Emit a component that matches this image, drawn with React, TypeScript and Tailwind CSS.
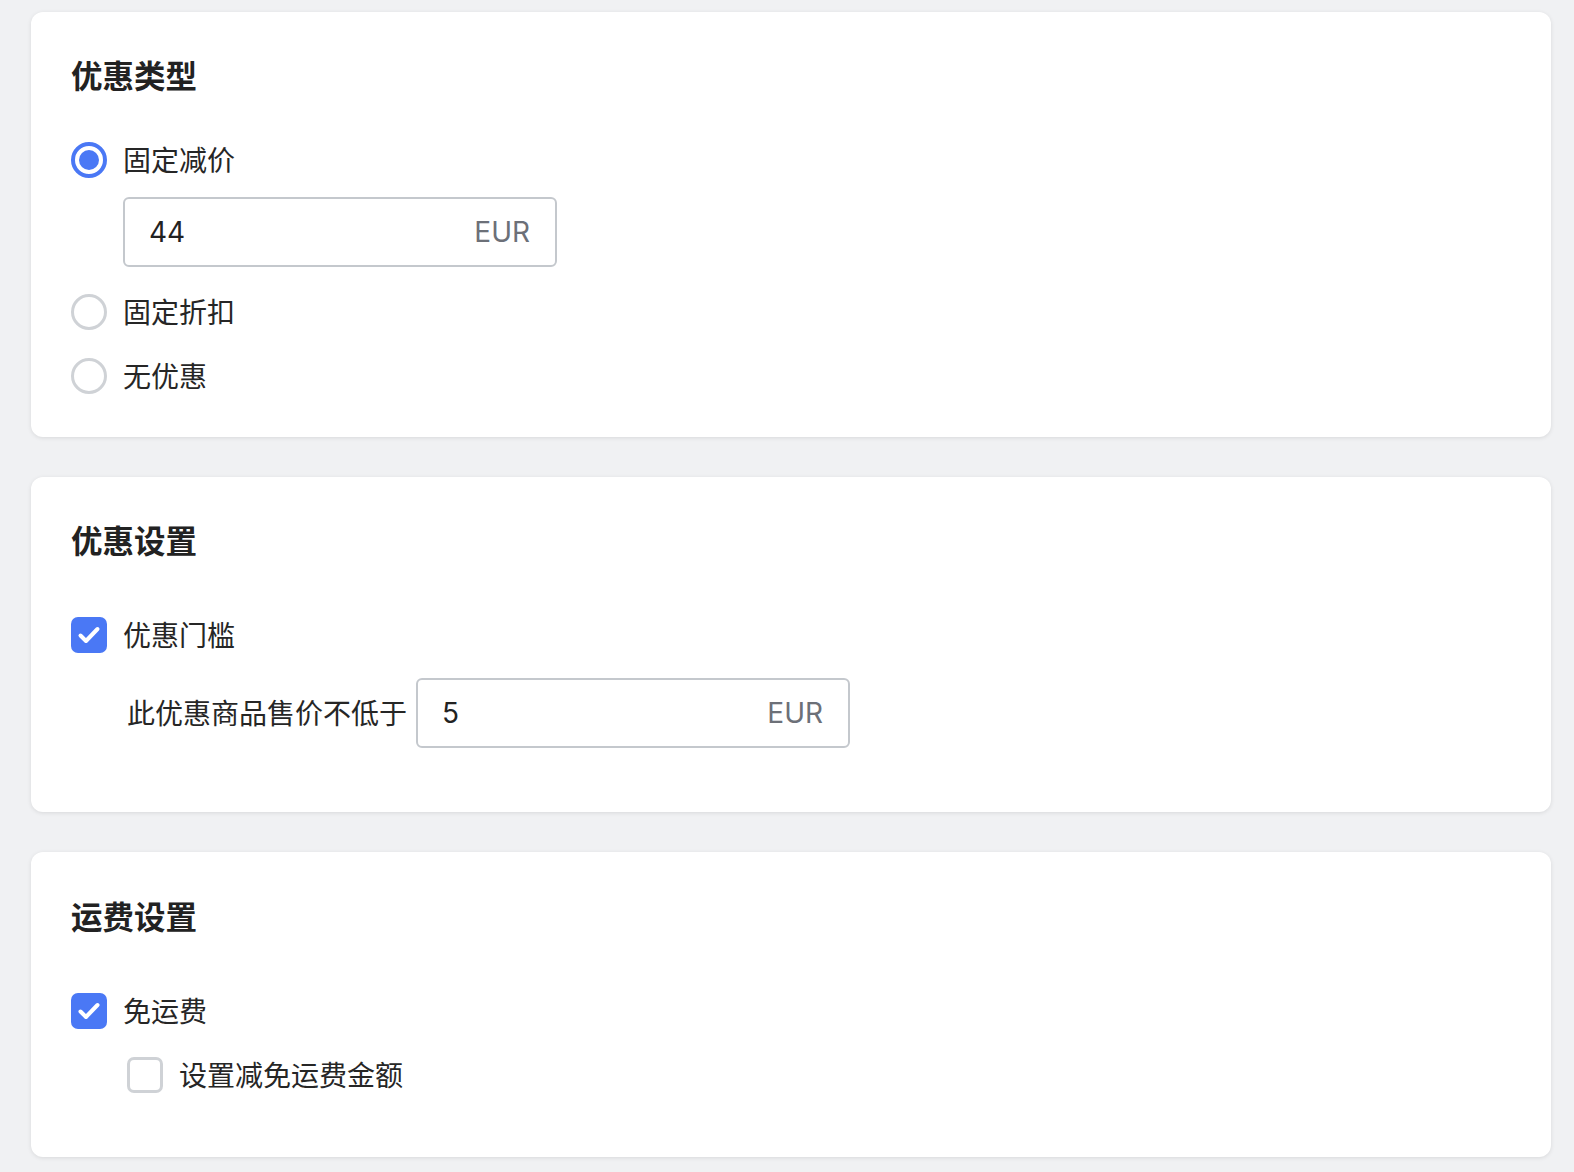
import React from "react";

const font = { fontFamily: "Inter, 'Noto Sans CJK SC', sans-serif" };

function Radio({ checked }: { checked?: boolean }) {
  return checked ? (
    <span className="flex h-[36px] w-[36px] shrink-0 items-center justify-center rounded-full border-[4px] border-[#4a78f5] bg-white">
      <span className="h-[20px] w-[20px] rounded-full bg-[#4a78f5]" />
    </span>
  ) : (
    <span className="h-[36px] w-[36px] shrink-0 rounded-full border-[3px] border-[#cfd2d6] bg-white" />
  );
}

function Checkbox({ checked }: { checked?: boolean }) {
  return checked ? (
    <span className="flex h-[36px] w-[36px] shrink-0 items-center justify-center rounded-[7px] bg-[#4a78f5]">
      <svg width="36" height="36" viewBox="0 0 36 36" fill="none">
        <path d="M9.5 18.5l5.5 5.5 11.5-12" stroke="white" strokeWidth="4" strokeLinecap="round" strokeLinejoin="round" />
      </svg>
    </span>
  ) : (
    <span className="h-[36px] w-[36px] shrink-0 rounded-[7px] border-[3px] border-[#cfd2d6] bg-white" />
  );
}

function MoneyInput({ value }: { value: string }) {
  return (
    <div className="flex h-[70px] w-[434px] items-center justify-between rounded-[6px] border-2 border-[#c4c8cd] bg-white pl-[24px] pr-[25px]">
      <span className="text-[28px] text-[#222]">{value}</span>
      <span className="text-[28px] text-[#6c7078]">EUR</span>
    </div>
  );
}

function Row({ children }: { children: React.ReactNode }) {
  return <div className="flex h-[40px] items-center gap-[16px]">{children}</div>;
}

function Label({ children }: { children: React.ReactNode }) {
  return <span className="pt-[2px] text-[28px] text-[#262626]">{children}</span>;
}

function Heading({ children }: { children: React.ReactNode }) {
  return <h2 className="h-[40px] pt-[1px] text-[31.5px] font-bold leading-[40px] text-[#222]">{children}</h2>;
}

export default function App() {
  return (
    <div className="min-h-[1172px] w-full bg-[#f0f1f3] pt-[12px] pl-[31px]" style={font}>
      <div className="flex w-[1520px] flex-col gap-[40px]">
        {/* Card 1 */}
        <div className="rounded-[12px] bg-white pl-[40px] pt-[44px] pb-[41px] shadow-[0_1px_4px_rgba(0,0,0,0.10)]">
          <Heading>优惠类型</Heading>
          <div className="mt-[44px]">
            <Row>
              <Radio checked />
              <Label>固定减价</Label>
            </Row>
          </div>
          <div className="mt-[17px] pl-[52px]">
            <MoneyInput value="44" />
          </div>
          <div className="mt-[25px]">
            <Row>
              <Radio />
              <Label>固定折扣</Label>
            </Row>
          </div>
          <div className="mt-[24px]">
            <Row>
              <Radio />
              <Label>无优惠</Label>
            </Row>
          </div>
        </div>

        {/* Card 2 */}
        <div className="rounded-[12px] bg-white pl-[40px] pt-[44px] pb-[64px] shadow-[0_1px_4px_rgba(0,0,0,0.10)]">
          <Heading>优惠设置</Heading>
          <div className="mt-[54px]">
            <Row>
              <Checkbox checked />
              <Label>优惠门槛</Label>
            </Row>
          </div>
          <div className="mt-[23px] flex items-center gap-[9px] pl-[56px]">
            <Label>此优惠商品售价不低于</Label>
            <MoneyInput value="5" />
          </div>
        </div>

        {/* Card 3 */}
        <div className="rounded-[12px] bg-white pl-[40px] pt-[45px] pb-[62px] shadow-[0_1px_4px_rgba(0,0,0,0.10)]">
          <Heading>运费设置</Heading>
          <div className="mt-[54px]">
            <Row>
              <Checkbox checked />
              <Label>免运费</Label>
            </Row>
          </div>
          <div className="mt-[24px] pl-[56px]">
            <Row>
              <Checkbox />
              <Label>设置减免运费金额</Label>
            </Row>
          </div>
        </div>
      </div>
    </div>
  );
}
